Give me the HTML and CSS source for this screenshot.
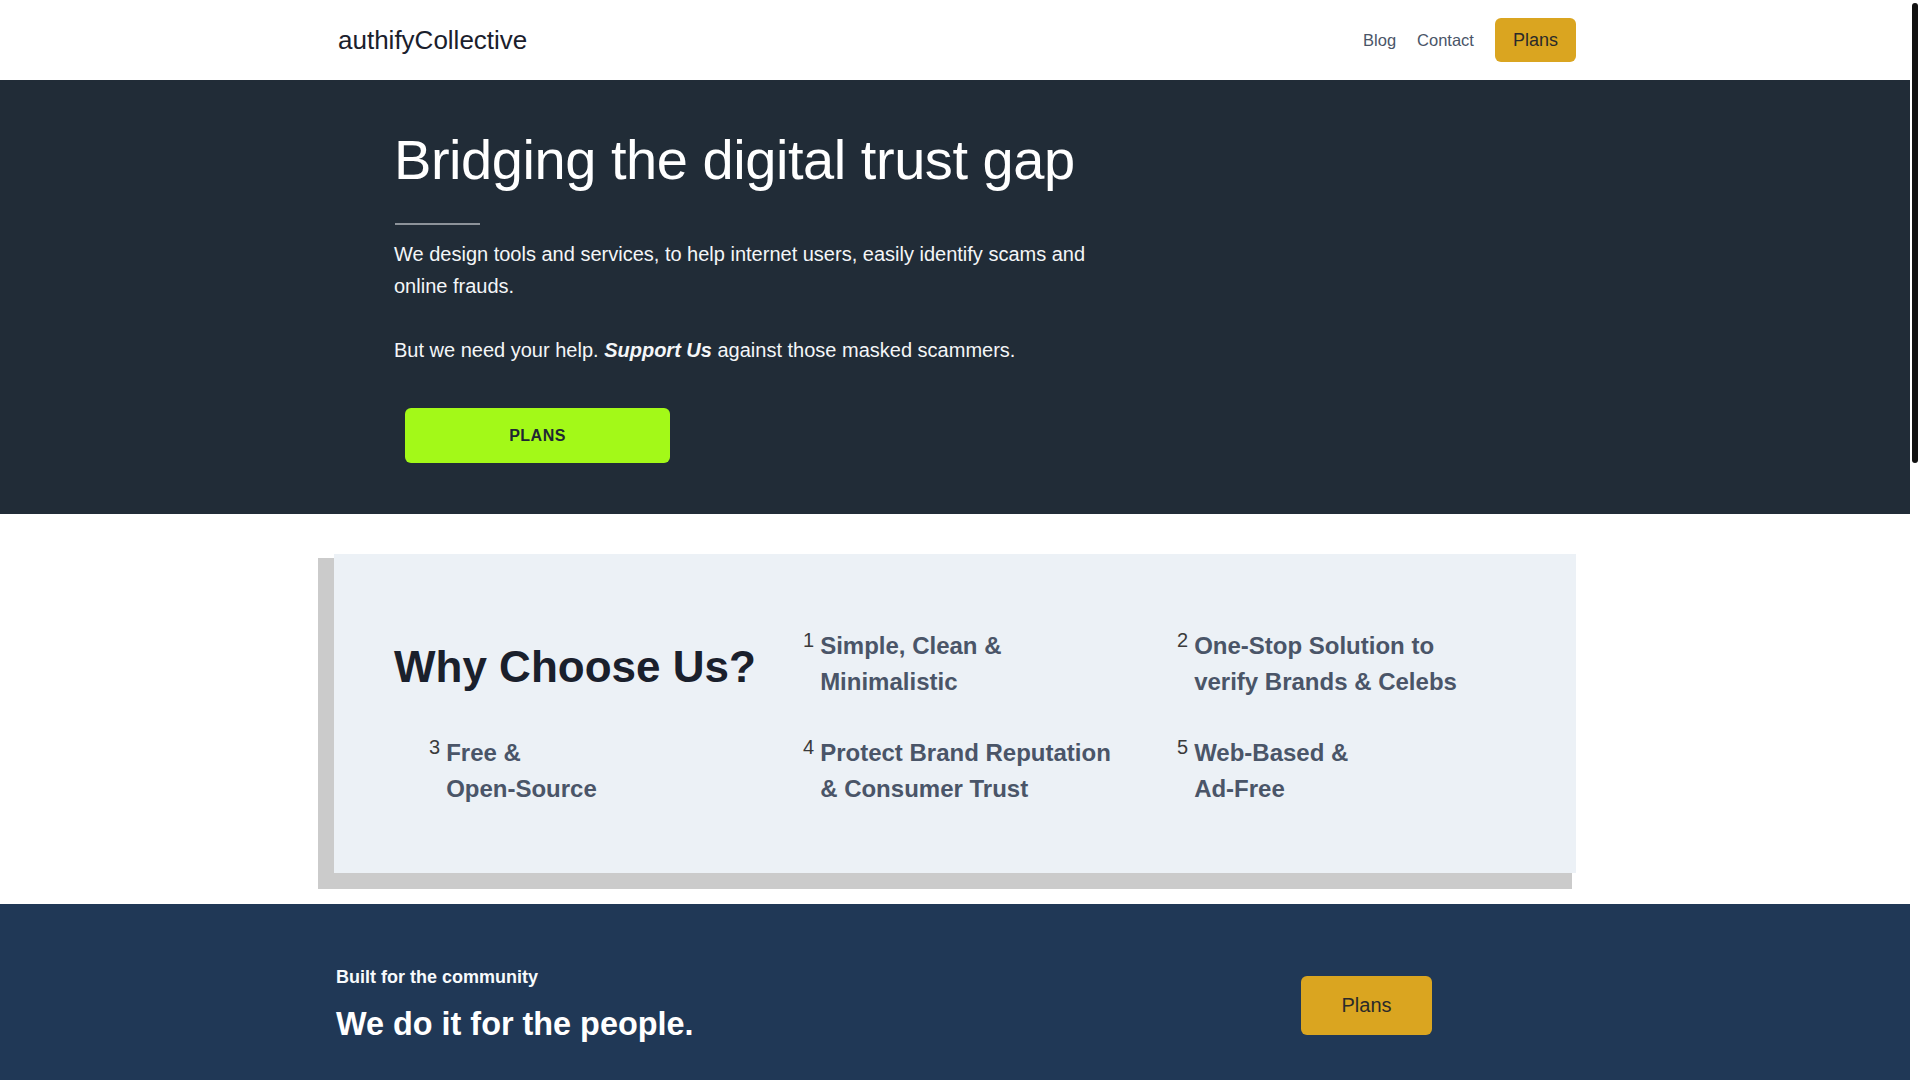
FILE: index.html
```html
<!DOCTYPE html>
<html lang="en">
<head>
<meta charset="utf-8">
<title>authifyCollective</title>
<link rel="stylesheet" href="styles.css">
</head>
<body>
<header class="nav">
  <div class="container nav-inner">
    <a class="logo" href="#">authifyCollective</a>
    <nav class="nav-links">
      <a href="#" class="nav-link">Blog</a>
      <a href="#" class="nav-link">Contact</a>
      <a href="#" class="btn-gold nav-btn">Plans</a>
    </nav>
  </div>
</header>

<section class="hero">
  <div class="container hero-inner">
    <h1 class="hero-title">Bridging the digital trust gap</h1>
    <hr class="hero-rule">
    <p class="hero-text">We design tools and services, to help internet users, easily identify scams and online frauds.</p>
    <p class="hero-text hero-text-gap">But we need your help. <strong><em>Support Us</em></strong> against those masked scammers.</p>
    <a href="#" class="btn-lime">PLANS</a>
  </div>
</section>

<section class="why">
  <div class="container card">
    <div class="card-grid">
      <h2 class="why-title">Why Choose Us?</h2>
      <div class="item"><span class="num">1</span><span class="item-text">Simple, Clean &amp;<br>Minimalistic</span></div>
      <div class="item"><span class="num">2</span><span class="item-text">One-Stop Solution to<br>verify Brands &amp; Celebs</span></div>
      <div class="item"><span class="num">3</span><span class="item-text">Free &amp;<br>Open-Source</span></div>
      <div class="item"><span class="num">4</span><span class="item-text">Protect Brand Reputation<br>&amp; Consumer Trust</span></div>
      <div class="item"><span class="num">5</span><span class="item-text">Web-Based &amp;<br>Ad-Free</span></div>
    </div>
  </div>
</section>

<section class="cta">
  <div class="container cta-inner">
    <div class="cta-text">
      <p class="cta-kicker">Built for the community</p>
      <p class="cta-title">We do it for the people.</p>
    </div>
    <div class="cta-action">
      <a href="#" class="btn-gold cta-btn">Plans</a>
    </div>
  </div>
</section>

<footer class="footer">
  <div class="container footer-inner">
    <span class="footer-copy">&copy; authifyCollective</span>
  </div>
</footer>

<div class="scroll-thumb" aria-hidden="true"></div>
</body>
</html>
```

FILE: styles.css
```css
* { box-sizing: border-box; }

html { margin: 0; padding: 0; background: #ffffff; }

body {
  margin: 0 10px 0 0;
  padding: 0;
  font-family: "Liberation Sans", Arial, Helvetica, sans-serif;
  color: #1a202c;
  background: #ffffff;
}

a { text-decoration: none; color: inherit; }

.container { width: 1242px; margin: 0 auto; }

/* fake overlay scrollbar thumb */
.scroll-thumb {
  position: fixed;
  top: 3px;
  right: 2px;
  width: 6px;
  height: 460px;
  background: #111111;
  border-radius: 3px;
}

/* NAV */
.nav { height: 80px; background: #ffffff; }
.nav-inner {
  height: 100%;
  display: flex;
  align-items: center;
  justify-content: space-between;
  padding-left: 4px;
}
.logo { font-size: 26px; color: #1a202c; }
.nav-links { display: flex; align-items: center; gap: 21px; }
.nav-link { font-size: 16.5px; color: #4a5568; }

.btn-gold {
  display: inline-block;
  background: #daa520;
  color: #2a2a2a;
  border-radius: 6px;
}
.nav-btn {
  font-size: 18px;
  height: 44px;
  line-height: 44px;
  padding: 0 18px;
}

/* HERO */
.hero { background: #212c37; color: #ffffff; }
.hero-inner { padding: 46px 60px 51px; }
.hero-title {
  margin: 0;
  font-size: 56px;
  font-weight: 400;
  line-height: 67px;
  letter-spacing: -0.45px;
}
.hero-rule {
  width: 85px;
  height: 2px;
  border: none;
  background: #8d939a;
  margin: 30px 0 12px 1px;
}
.hero-text {
  margin: 0;
  max-width: 720px;
  font-size: 20px;
  line-height: 32px;
  color: #f4f6f8;
}
.hero-text:first-of-type { padding-top: 1px; }
.hero-text-gap { margin-top: 32px; }

.btn-lime {
  display: block;
  width: 265px;
  height: 55px;
  margin: 42px 0 0 11px;
  background: #a3f918;
  color: #1f2733;
  border-radius: 6px;
  font-size: 16px;
  font-weight: 700;
  letter-spacing: 0.5px;
  line-height: 55px;
  text-align: center;
}

/* WHY */
.why { padding: 40px 0 31px; }
.card {
  background: #ecf1f6;
  box-shadow: -10px 10px 0 6px #cbcbcb;
  padding: 74px 60px 66px;
}
.card-grid {
  display: grid;
  grid-template-columns: repeat(3, 1fr);
  row-gap: 35px;
  align-items: center;
}
.why-title {
  margin: 5px 0 0;
  font-size: 44px;
  line-height: 53px;
  font-weight: 700;
  color: #1a202c;
}
.item {
  display: flex;
  align-items: flex-start;
  gap: 6px;
  padding-left: 35px;
}
.num {
  margin-top: 2px;
  font-size: 20px;
  line-height: 20px;
  color: #3a3a3a;
}
.item-text {
  font-size: 24px;
  line-height: 36px;
  font-weight: 700;
  color: #4a5568;
}

/* CTA */
.cta { background: #203856; color: #ffffff; }
.cta-inner {
  display: grid;
  grid-template-columns: 2fr 1fr;
  align-items: center;
  padding: 60px 0 58px;
}
.cta-text { padding-left: 2px; }
.cta-kicker {
  margin: 0;
  font-size: 18px;
  line-height: 27px;
  font-weight: 700;
  color: #f7fafc;
}
.cta-title {
  margin: 13px 0 0;
  font-size: 32.4px;
  line-height: 40px;
  font-weight: 700;
  color: #ffffff;
}
.cta-action {
  display: flex;
  justify-content: center;
  padding: 2px 5px 0 0;
}
.cta-btn {
  font-size: 20px;
  line-height: 25px;
  padding: 17px 40px;
}

/* FOOTER */
.footer { background: #203856; min-height: 1420px; }
.footer-inner { padding: 40px 0; color: #cbd5e0; font-size: 14px; }
```
